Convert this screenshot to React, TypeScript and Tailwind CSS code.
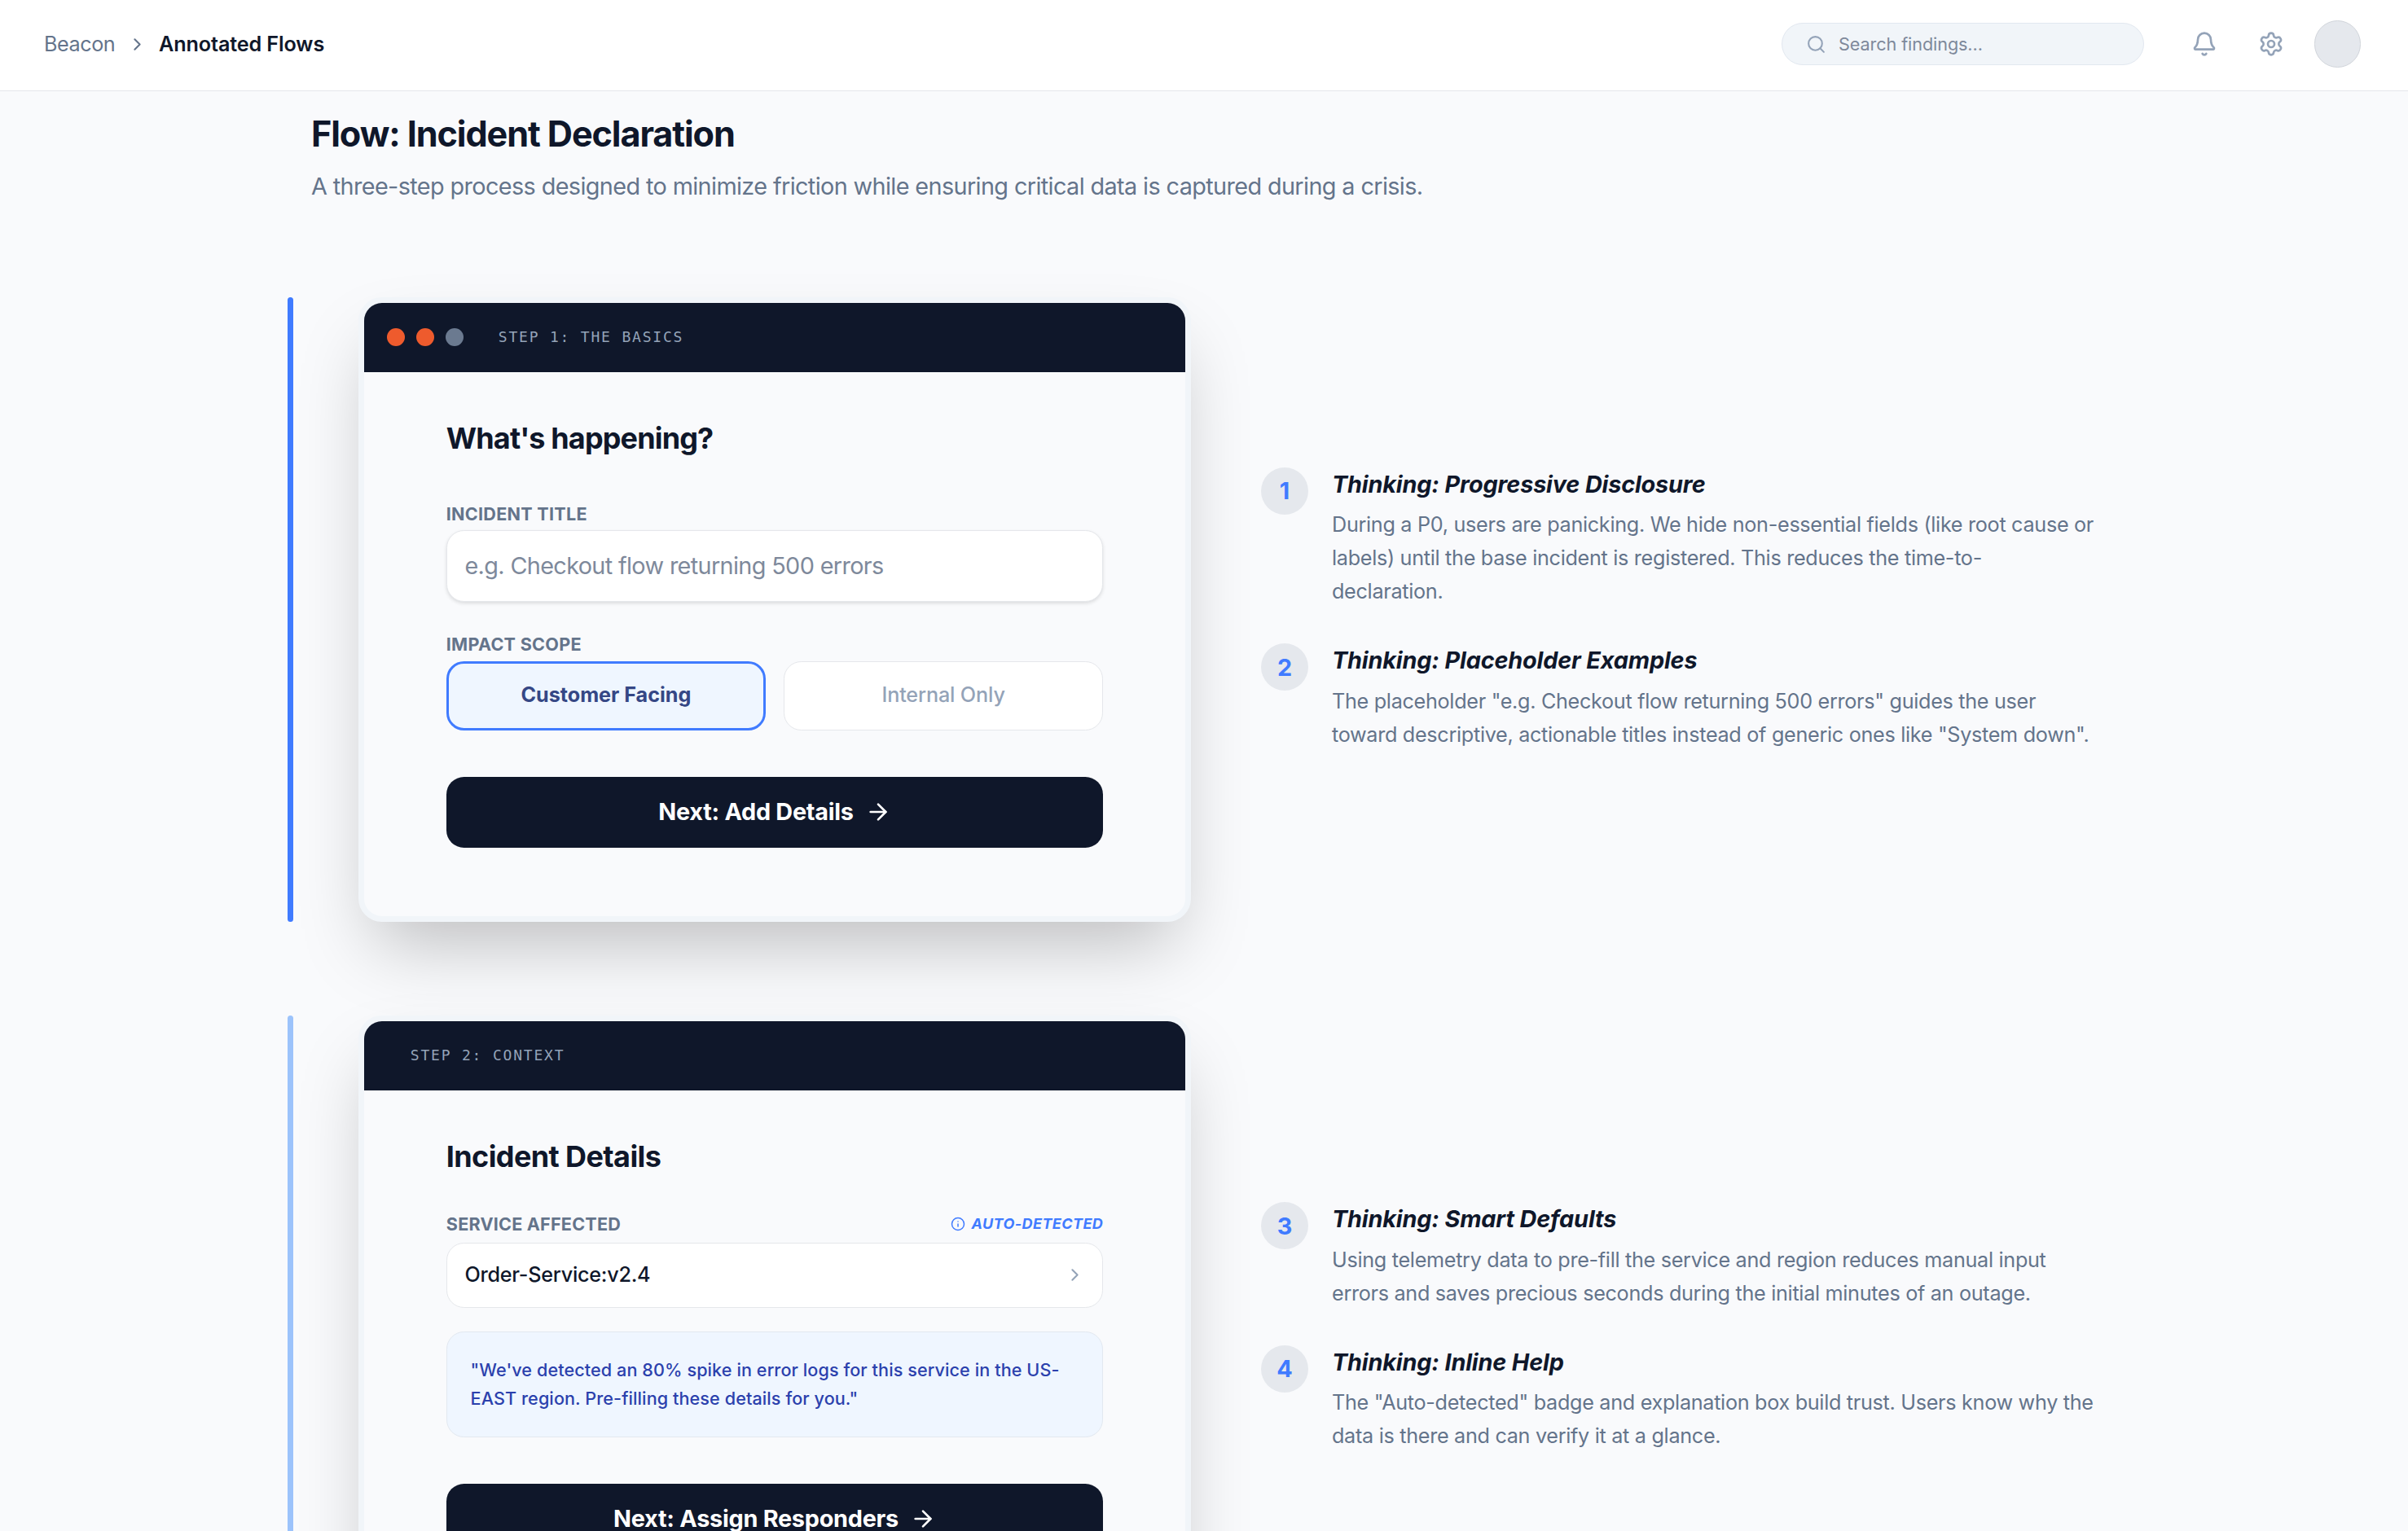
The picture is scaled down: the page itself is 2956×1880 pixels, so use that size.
import { ReactNode } from "react";
import { ArrowRight, Bell, ChevronRight, Info, Search, Settings } from "lucide-react";

interface noteType {
  id: number;
  title: string;
  text: string;
}

const basicsNotes: noteType[] = [
  {
    id: 1,
    title: "Thinking: Progressive Disclosure",
    text: "During a P0, users are panicking. We hide non-essential fields (like root cause or labels) until the base incident is registered. This reduces the time-to-\ndeclaration.",
  },
  {
    id: 2,
    title: "Thinking: Placeholder Examples",
    text: 'The placeholder "e.g. Checkout flow returning 500 errors" guides the user toward descriptive, actionable titles instead of generic ones like "System down".',
  },
];

const contextNotes: noteType[] = [
  {
    id: 3,
    title: "Thinking: Smart Defaults",
    text: "Using telemetry data to pre-fill the service and region reduces manual input errors and saves precious seconds during the initial minutes of an outage.",
  },
  {
    id: 4,
    title: "Thinking: Inline Help",
    text: 'The "Auto-detected" badge and explanation box build trust. Users know why the data is there and can verify it at a glance.',
  },
];

function Header() {
  return (
    <header className="w-full h-[112px] shrink-0 flex justify-between items-center pl-[54px] pr-[58px] pb-[3px] bg-white border-b border-[#e5e7eb]">
      <nav className="flex items-center pt-[1px] text-[25.2px]">
        <span className="w-[90px] text-[#64748b] tracking-[-0.45px]">Beacon</span>
        <ChevronRight className="w-[25px] h-[25px] ml-[12px] mr-[14px] text-[#64748b]" />
        <span className="font-semibold text-[#0f172a] tracking-[-0.12px]">Annotated Flows</span>
      </nav>

      <div className="flex items-center">
        <div className="w-[445px] h-[52px] flex items-center pl-[29px] gap-[15px] rounded-full bg-[#f1f5f9] border border-[#e2e8f0]">
          <Search className="w-[25px] h-[25px] text-[#94a3b8]" />
          <input
            type="text"
            placeholder="Search findings..."
            className="w-[300px] text-[21.6px] tracking-[-0.08px] outline-none placeholder:text-[#7e899b]"
          />
        </div>
        <Bell className="w-[32px] h-[32px] ml-[58px] text-[#94a3b8]" />
        <Settings className="w-[32px] h-[32px] ml-[50px] text-[#94a3b8]" />
        <div className="w-[57px] h-[58px] ml-[37px] rounded-full bg-[#e5e8ed] border border-[#d1d5db]" />
      </div>
    </header>
  );
}

function Note({ note }: { note: noteType }) {
  return (
    <div className="flex items-start gap-[29px]">
      <div className="w-[58px] h-[58px] shrink-0 flex justify-center items-center rounded-full bg-[#e5e8ed] text-[28.8px] font-bold text-[#407bff]">
        {note.id}
      </div>
      <div className="w-[945px]">
        <h4 className="mb-[7.2px] text-[28.8px] leading-[42.4px] pb-[0.8px] font-bold italic text-[#0f172a] tracking-[-0.15px]">
          {note.title}
        </h4>
        <p className="whitespace-pre-line text-[25.2px] leading-[40.95px] text-[#64748b] tracking-[-0.3px]">
          {note.text}
        </p>
      </div>
    </div>
  );
}

interface stepProps {
  bar: string;
  label: string;
  dots?: boolean;
  notes: noteType[];
  children: ReactNode;
}

function Step({ bar, label, dots, notes, children }: stepProps) {
  return (
    <section className="h-[767px] shrink-0 flex items-stretch">
      <div className={"w-[7px] rounded-full " + bar} />

      <div className="w-[1022px] ml-[80px] flex flex-col rounded-[28.8px] overflow-hidden bg-[#f9fafc] border-[7px] border-[#f1f5f9] shadow-[0_45px_90px_-21.6px_rgba(0,0,0,0.25)]">
        <div className="h-[85px] shrink-0 flex items-center px-[28px] pb-[1px] bg-[#0f172a]">
          {dots && (
            <div className="flex gap-[14.4px] mr-[14.4px]">
              <div className="w-[21.6px] h-[21.6px] rounded-full bg-[#ee5b2d]" />
              <div className="w-[21.6px] h-[21.6px] rounded-full bg-[#ee5b2d]" />
              <div className="w-[21.6px] h-[21.6px] rounded-full bg-[#6b7a90]" />
            </div>
          )}
          <span className="ml-[28.8px] font-['DejaVu_Sans_Mono',monospace] text-[18px] tracking-[1.8px] text-[#94a3b8]">
            {label}
          </span>
        </div>
        <div className="grow px-[100.8px] pt-[56px] flex flex-col">{children}</div>
      </div>

      <div className="ml-[86px] flex flex-col justify-center gap-[43.2px]">
        {notes.map((note) => (
          <Note key={note.id} note={note} />
        ))}
      </div>
    </section>
  );
}

function NextButton({ text }: { text: string }) {
  return (
    <button className="w-full h-[87px] shrink-0 flex justify-center items-center gap-[14px] pb-[1px] rounded-[21.6px] bg-[#0f172a] text-white text-[28.8px] font-bold tracking-[-0.25px]">
      {text}
      <ArrowRight className="w-[32px] h-[32px]" />
    </button>
  );
}

export default function App() {
  return (
    <div className="w-full h-[1880px] flex flex-col overflow-hidden bg-[#f9fafc] font-['Inter',sans-serif]">
      <Header />

      <main className="grow flex flex-col pl-[353px]">
        <div className="pl-[29px] mt-[24px]">
          <h1 className="text-[43.2px] leading-[57px] font-bold text-[#0f172a] tracking-[-1.1px]">
            Flow: Incident Declaration
          </h1>
          <p className="mt-[13.6px] text-[28.8px] leading-[43.2px] text-[#64748b] tracking-[-0.61px]">
            A three-step process designed to minimize friction while ensuring critical data is captured during a crisis.
          </p>
        </div>

        <div className="mt-[115px] flex flex-col gap-[115px]">
          <Step bar="bg-[#407bff]" label="STEP 1: THE BASICS" dots notes={basicsNotes}>
            <h3 className="text-[36px] leading-[50px] font-bold text-[#0f172a] tracking-[-0.85px]">What's happening?</h3>

            <label className="mt-[52px] text-[21.6px] leading-[32px] font-bold text-[#64748b] tracking-[0.25px]">
              INCIDENT TITLE
            </label>
            <input
              type="text"
              placeholder="e.g. Checkout flow returning 500 errors"
              className="w-full h-[88px] mt-[4px] px-[21.6px] rounded-[21.6px] bg-white border border-[#e5e7eb] shadow-[0_2px_4px_rgba(0,0,0,0.12)] text-[28.8px] tracking-[-0.63px] outline-none placeholder:text-[#7e899b]"
            />

            <label className="mt-[36px] text-[21.6px] leading-[32px] font-bold text-[#64748b] tracking-[0.25px]">
              IMPACT SCOPE
            </label>
            <div className="mt-[5px] grid grid-cols-2 gap-[22px] text-[25.2px] tracking-[-0.15px]">
              <button className="h-[85px] rounded-[21.6px] bg-[#eff6ff] border-3 border-[#407bff] font-bold tracking-[-0.02px] text-[#354785]">
                Customer Facing
              </button>
              <button className="h-[85px] rounded-[21.6px] bg-white border border-[#e5e7eb] font-medium text-[#94a3b8]">
                Internal Only
              </button>
            </div>

            <div className="mt-[57px]">
              <NextButton text="Next: Add Details" />
            </div>
          </Step>

          <Step bar="bg-[#9cc3fb]" label="STEP 2: CONTEXT" notes={contextNotes}>
            <h3 className="text-[36px] leading-[50px] font-bold text-[#0f172a] tracking-[-0.6px]">Incident Details</h3>

            <div className="mt-[42px] flex justify-between items-center leading-[32px]">
              <span className="text-[21.6px] font-bold text-[#64748b] tracking-[0.2px]">SERVICE AFFECTED</span>
              <span className="flex items-center gap-[7.2px] text-[18px] font-bold italic text-[#407bff] tracking-[0.4px]">
                <Info className="w-[18px] h-[18px]" />
                AUTO-DETECTED
              </span>
            </div>
            <div className="h-[80px] shrink-0 mt-[7px] px-[21.6px] flex justify-between items-center rounded-[21.6px] bg-white border border-[#e5e7eb] text-[25.2px] font-medium text-[#0f172a] tracking-[-0.25px]">
              Order-Service:v2.4
              <ChevronRight className="w-[25px] h-[25px] text-[#94a3b8]" />
            </div>

            <p className="mt-[29px] p-[28.8px] rounded-[21.6px] bg-[#eff6ff] border border-[#e2e8f0] text-[21.6px] leading-[35.1px] font-medium text-[#2b41ad] tracking-[0.09px]">
              "We've detected an 80% spike in error logs for this service in the US-EAST region. Pre-filling these details
              for you."
            </p>

            <div className="mt-[57px]">
              <NextButton text="Next: Assign Responders" />
            </div>
          </Step>
        </div>
      </main>
    </div>
  );
}
